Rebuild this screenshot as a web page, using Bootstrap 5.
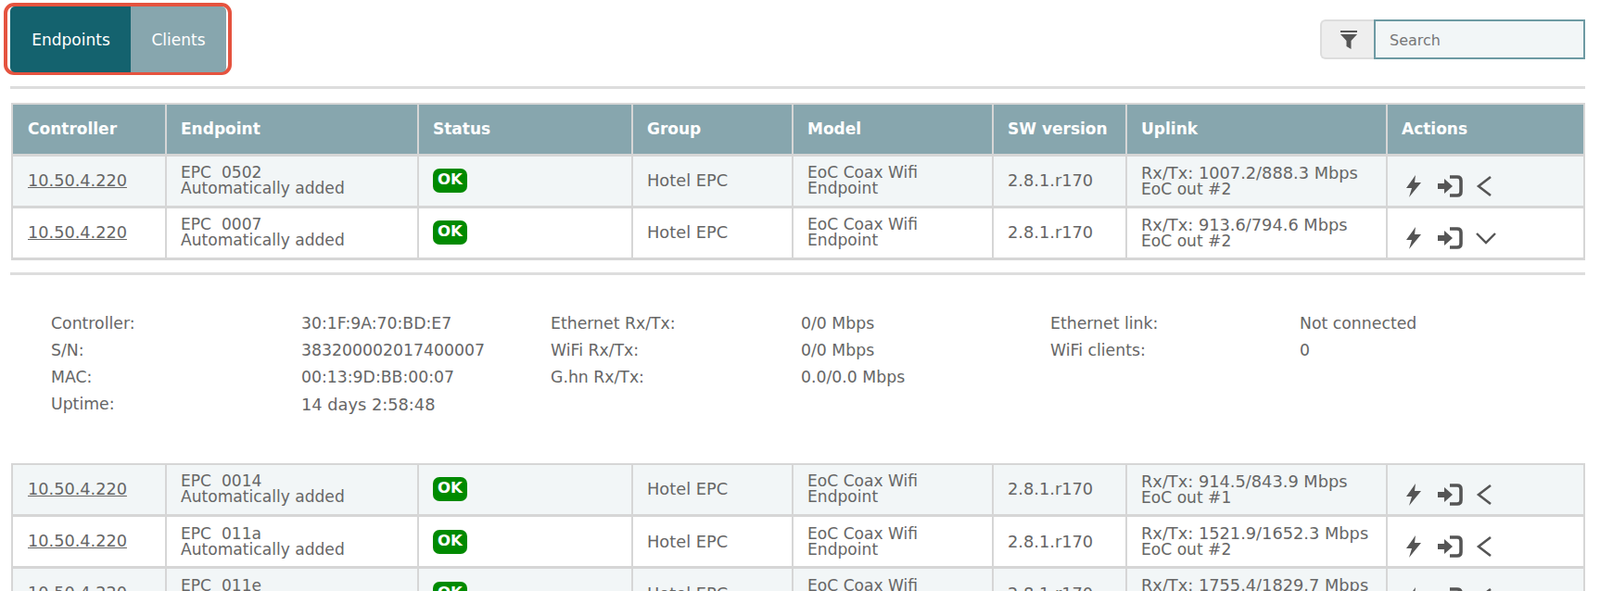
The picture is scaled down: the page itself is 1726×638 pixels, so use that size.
<!DOCTYPE html>
<html lang="en">
<head>
<meta charset="utf-8">
<title>Endpoints</title>
<link href="https://cdn.jsdelivr.net/npm/bootstrap@5.3.0/dist/css/bootstrap.min.css" rel="stylesheet">
<style>
html,body{overflow:hidden;height:638px}
body{font-family:"DejaVu Sans",Verdana,sans-serif;font-size:17.3px;color:#666;background:#fff;padding:3px 16px 0 12px;margin:0}
.topbar{height:78px;margin-left:-8px;margin-bottom:12px}
.tabframe{border:4px solid #e5533f;border-radius:11px;padding:0 1px 0 3px;height:78px;width:246px;background:#fff}
.tabframe .btn{border:0;border-radius:0;width:131px;height:71px;font-size:17px;color:#fff;font-family:"DejaVu Sans",sans-serif;padding:2px 0 0;flex:none}
.tabframe .btn:first-child{background:#14626e;border-radius:5px 0 0 5px}
.tabframe .btn:last-child{background:#87a6ae;width:103px;border-radius:0 5px 5px 0}
.searchwrap{width:286px;height:43px;margin-top:18px;margin-right:0}
.searchwrap .input-group-text{width:59px;height:43px;background:#eee;border:2px solid #ddd;border-right:0;border-radius:6px 0 0 6px;justify-content:center;padding:0}
.searchwrap .form-control{height:43px;background:#f2f6f7;border:2px solid #6d9aa3;border-radius:0;font-size:16px;padding:2px 15px 0;color:#666}
.searchwrap .form-control::placeholder{color:#777;opacity:1}
.rule{height:3px;background:#ddd;margin:0;border:0;opacity:1;width:1699px;margin-left:-1px}
.rule-a{margin-bottom:15px}
.rule-b{margin-top:13px}
.grid-table{table-layout:fixed;width:1698px;border-collapse:collapse;margin:0;border:2px solid #d6d6d6}
.grid-table th,.grid-table td{border:2px solid #d6d6d6;border-bottom-width:3px;padding:0 15px;vertical-align:middle;color:#666;font-weight:400;font-size:17.1px;line-height:17px;box-shadow:none}
.grid-table th{background:#87a6ae;color:#fff;font-weight:700;height:55px;font-size:17px}
.grid-table td{height:56px;background:#fff}
.grid-table tr.tinted td{background:#f2f6f7}
.grid-table th:first-child,.grid-table td:first-child{padding-left:16px}
.grid-table .c1{width:166px}.grid-table .c2{width:272px}.grid-table .c3{width:231px}.grid-table .c4{width:173px}.grid-table .c5{width:216px}.grid-table .c6{width:144px}.grid-table .c7{width:281px}
.grid-table a{color:#666;font-size:17.7px}
.numval{font-size:17.8px}
.okpill{display:inline-block;background:#008a00;color:#fff;font-weight:700;font-size:16.5px;line-height:24px;height:26px;width:37px;text-align:center;border-radius:7px;vertical-align:middle}
.actionset{display:flex;align-items:center;padding-top:11px;margin-left:4px}
.actionset svg:nth-child(2){margin:0 14px 0 16px}
.detailgrid{display:grid;grid-template-columns:270px 269px 270px 269px 269px 269px;padding:38px 0 0 43px;height:203px;line-height:29px;color:#666;grid-auto-rows:29px}
</style>
</head>
<body>
<div class="d-flex justify-content-between align-items-start topbar">
  <div class="tabframe d-flex btn-group" role="group">
    <button type="button" class="btn">Endpoints</button>
    <button type="button" class="btn">Clients</button>
  </div>
  <div class="input-group flex-nowrap searchwrap">
    <span class="input-group-text">
      <svg width="20" height="22" viewBox="0 0 20 22"><path d="M1 1h18v2H1z" fill="#555"/><path d="M1 5h18l-6.5 7v9l-5-3v-6z" fill="#555"/></svg>
    </span>
    <input class="form-control" type="text" placeholder="Search">
  </div>
</div>
<hr class="rule rule-a">
<table class="table grid-table">
  <colgroup><col class="c1"><col class="c2"><col class="c3"><col class="c4"><col class="c5"><col class="c6"><col class="c7"><col></colgroup>
  <thead><tr><th>Controller</th><th>Endpoint</th><th>Status</th><th>Group</th><th>Model</th><th>SW version</th><th>Uplink</th><th>Actions</th></tr></thead>
  <tbody>
    <tr class="tinted"><td><a href="#">10.50.4.220</a></td><td>EPC&nbsp; 0502<br>Automatically added</td><td><span class="okpill">OK</span></td><td><span class="numval">Hotel EPC</span></td><td>EoC Coax Wifi<br>Endpoint</td><td><span class="numval">2.8.1.r170</span></td><td><span class="numval">Rx/Tx: 1007.2/888.3 Mbps</span><br>EoC out #2</td>
      <td><div class="actionset"><svg width="18" height="24" viewBox="0 0 18 24"><path d="M11 0 1 14h6l-3 10L17 8h-7z" fill="#555"/></svg><svg width="28" height="24" viewBox="0 0 28 24"><path d="M1 9h7V4l9 8-9 8v-5H1z" fill="#555"/><path d="M14 2h8q4 0 4 4v12q0 4-4 4h-8" fill="none" stroke="#555" stroke-width="3.6"/></svg><svg width="18" height="24" viewBox="0 0 18 24"><path d="M16 2 3 12l13 10" fill="none" stroke="#555" stroke-width="2.6"/></svg></div></td></tr>
    <tr><td><a href="#">10.50.4.220</a></td><td>EPC&nbsp; 0007<br>Automatically added</td><td><span class="okpill">OK</span></td><td><span class="numval">Hotel EPC</span></td><td>EoC Coax Wifi<br>Endpoint</td><td><span class="numval">2.8.1.r170</span></td><td><span class="numval">Rx/Tx: 913.6/794.6 Mbps</span><br>EoC out #2</td>
      <td><div class="actionset"><svg width="18" height="24" viewBox="0 0 18 24"><path d="M11 0 1 14h6l-3 10L17 8h-7z" fill="#555"/></svg><svg width="28" height="24" viewBox="0 0 28 24"><path d="M1 9h7V4l9 8-9 8v-5H1z" fill="#555"/><path d="M14 2h8q4 0 4 4v12q0 4-4 4h-8" fill="none" stroke="#555" stroke-width="3.6"/></svg><svg width="22" height="24" viewBox="0 0 22 24"><path d="M1 7l10 10L21 7" fill="none" stroke="#555" stroke-width="2.4"/></svg></div></td></tr>
  </tbody>
</table>
<hr class="rule rule-b">
<div class="detailgrid">
  <div>Controller:</div><div>30:1F:9A:70:BD:E7</div><div>Ethernet Rx/Tx:</div><div>0/0 Mbps</div><div>Ethernet link:</div><div>Not connected</div>
  <div>S/N:</div><div>383200002017400007</div><div>WiFi Rx/Tx:</div><div>0/0 Mbps</div><div>WiFi clients:</div><div>0</div>
  <div>MAC:</div><div>00:13:9D:BB:00:07</div><div>G.hn Rx/Tx:</div><div>0.0/0.0 Mbps</div><div></div><div></div>
  <div>Uptime:</div><div class="numval">14 days 2:58:48</div><div></div><div></div><div></div><div></div>
</div>
<table class="table grid-table">
  <colgroup><col class="c1"><col class="c2"><col class="c3"><col class="c4"><col class="c5"><col class="c6"><col class="c7"><col></colgroup>
  <tbody>
    <tr class="tinted"><td><a href="#">10.50.4.220</a></td><td>EPC&nbsp; 0014<br>Automatically added</td><td><span class="okpill">OK</span></td><td><span class="numval">Hotel EPC</span></td><td>EoC Coax Wifi<br>Endpoint</td><td><span class="numval">2.8.1.r170</span></td><td><span class="numval">Rx/Tx: 914.5/843.9 Mbps</span><br>EoC out #1</td>
      <td><div class="actionset"><svg width="18" height="24" viewBox="0 0 18 24"><path d="M11 0 1 14h6l-3 10L17 8h-7z" fill="#555"/></svg><svg width="28" height="24" viewBox="0 0 28 24"><path d="M1 9h7V4l9 8-9 8v-5H1z" fill="#555"/><path d="M14 2h8q4 0 4 4v12q0 4-4 4h-8" fill="none" stroke="#555" stroke-width="3.6"/></svg><svg width="18" height="24" viewBox="0 0 18 24"><path d="M16 2 3 12l13 10" fill="none" stroke="#555" stroke-width="2.6"/></svg></div></td></tr>
    <tr><td><a href="#">10.50.4.220</a></td><td>EPC&nbsp; 011a<br>Automatically added</td><td><span class="okpill">OK</span></td><td><span class="numval">Hotel EPC</span></td><td>EoC Coax Wifi<br>Endpoint</td><td><span class="numval">2.8.1.r170</span></td><td><span class="numval">Rx/Tx: 1521.9/1652.3 Mbps</span><br>EoC out #2</td>
      <td><div class="actionset"><svg width="18" height="24" viewBox="0 0 18 24"><path d="M11 0 1 14h6l-3 10L17 8h-7z" fill="#555"/></svg><svg width="28" height="24" viewBox="0 0 28 24"><path d="M1 9h7V4l9 8-9 8v-5H1z" fill="#555"/><path d="M14 2h8q4 0 4 4v12q0 4-4 4h-8" fill="none" stroke="#555" stroke-width="3.6"/></svg><svg width="18" height="24" viewBox="0 0 18 24"><path d="M16 2 3 12l13 10" fill="none" stroke="#555" stroke-width="2.6"/></svg></div></td></tr>
    <tr class="tinted"><td><a href="#">10.50.4.220</a></td><td>EPC&nbsp; 011e<br>Automatically added</td><td><span class="okpill">OK</span></td><td><span class="numval">Hotel EPC</span></td><td>EoC Coax Wifi<br>Endpoint</td><td><span class="numval">2.8.1.r170</span></td><td><span class="numval">Rx/Tx: 1755.4/1829.7 Mbps</span><br>EoC out #2</td>
      <td><div class="actionset"><svg width="18" height="24" viewBox="0 0 18 24"><path d="M11 0 1 14h6l-3 10L17 8h-7z" fill="#555"/></svg><svg width="28" height="24" viewBox="0 0 28 24"><path d="M1 9h7V4l9 8-9 8v-5H1z" fill="#555"/><path d="M14 2h8q4 0 4 4v12q0 4-4 4h-8" fill="none" stroke="#555" stroke-width="3.6"/></svg><svg width="18" height="24" viewBox="0 0 18 24"><path d="M16 2 3 12l13 10" fill="none" stroke="#555" stroke-width="2.6"/></svg></div></td></tr>
  </tbody>
</table>
<script src="https://cdn.jsdelivr.net/npm/bootstrap@5.3.0/dist/js/bootstrap.bundle.min.js"></script>
</body>
</html>
